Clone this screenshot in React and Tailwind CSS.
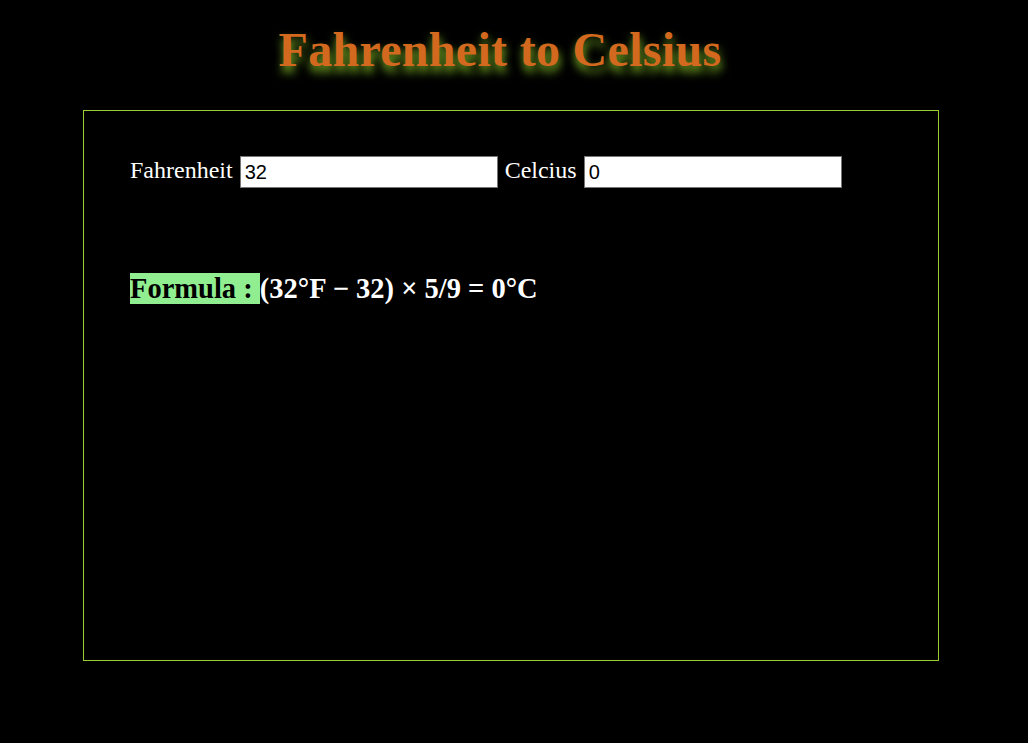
export default function App() {
  return (
    <div className="w-[1028px] h-[743px] bg-black overflow-hidden" style={{ fontFamily: '"Liberation Serif", serif' }}>
      <h1
        className="pt-[22px] pr-[28px] text-center text-[48px] leading-[55px] font-bold text-[#d2691e] tracking-[0.3px]"
        style={{ textShadow: '1px 6px 10px #7fb526' }}
      >
        Fahrenheit to Celsius
      </h1>
      <div className="mt-[33px] ml-[83px] w-[856px] h-[551px] border border-[#9acd32] pl-[46px] pt-[45px]">
        <div className="flex items-center h-[32px] text-white text-[24px]">
          <span className="relative -top-[2px]">Fahrenheit</span>
          <input
            readOnly
            value="32"
            className="ml-[7px] w-[258px] h-[32px] bg-white border border-[#767676] px-[4px] text-black text-[20px]"
            style={{ fontFamily: '"Liberation Sans", sans-serif' }}
          />
          <span className="ml-[7px] relative -top-[2px]">Celcius</span>
          <input
            readOnly
            value="0"
            className="ml-[7px] w-[258px] h-[32px] bg-white border border-[#767676] px-[4px] text-black text-[20px]"
            style={{ fontFamily: '"Liberation Sans", sans-serif' }}
          />
        </div>
        <div className="mt-[85px] text-[28.5px] font-bold leading-[32px]">
          <span className="bg-[#90ee90] text-black">Formula : </span>
          <span className="text-white">(32°F − 32) × 5/9 = 0°C</span>
        </div>
      </div>
    </div>
  );
}
